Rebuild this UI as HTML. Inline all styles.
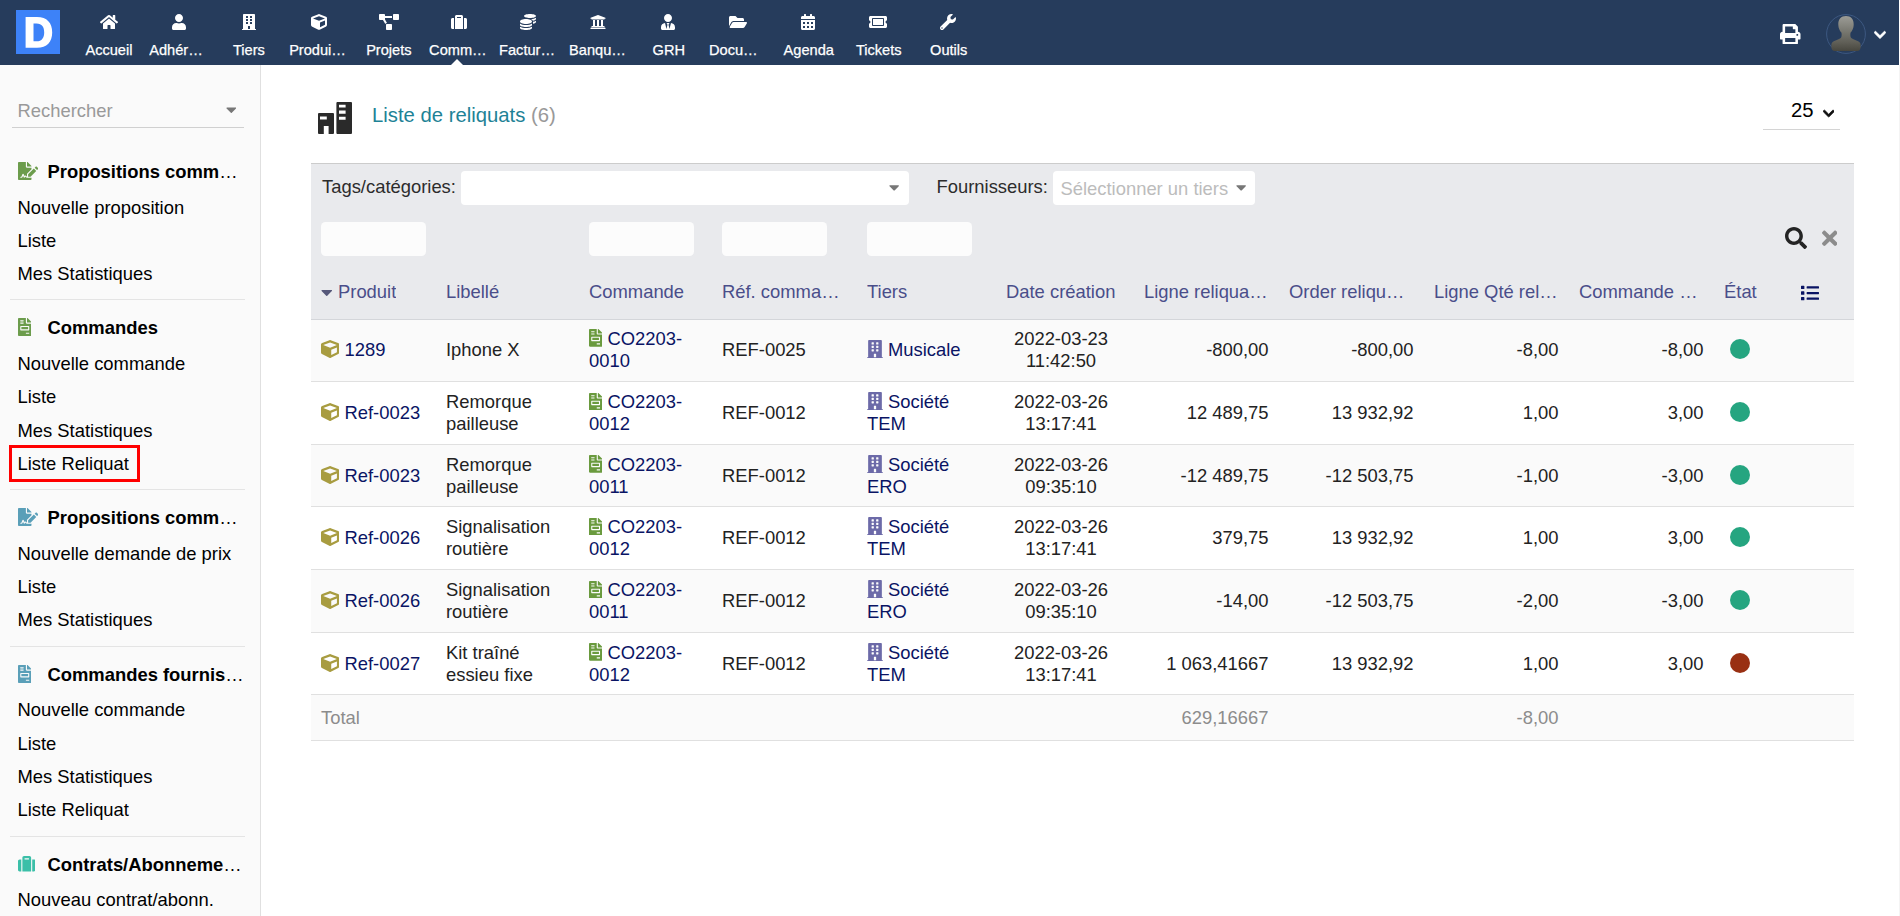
<!DOCTYPE html>
<html><head><meta charset="utf-8"><title>Liste de reliquats</title>
<style>
html,body{margin:0;padding:0;}
body{width:1900px;height:916px;overflow:hidden;background:#fff;position:relative;font-family:"Liberation Sans",sans-serif;font-size:18.4px;color:#000;line-height:22px;}
div,span,a{box-sizing:border-box;}
.abs{position:absolute;white-space:nowrap;}
#top{position:absolute;left:0;top:0;width:1899px;height:65px;background:#263c5c;}
#logo{position:absolute;left:16px;top:10px;width:44px;height:44px;background:#3d82f8;}
.tm{position:absolute;top:39.700px;width:59.500px;height:20px;line-height:20px;font-size:14.600px;color:#fff;-webkit-text-stroke:0.250px #fff;text-align:center;white-space:nowrap;overflow:hidden;text-overflow:ellipsis;}
.tml{text-align:left;}
#side{position:absolute;left:0;top:65px;width:260px;height:851px;background:#fafafa;border-right:1px solid #e0e0e0;box-sizing:content-box;}
.mt b{font-weight:bold;}
.mt{position:absolute;left:47.5px;font-weight:normal;font-size:18.4px;line-height:22px;white-space:nowrap;width:197px;overflow:hidden;text-overflow:ellipsis;color:#000;}
.mi{position:absolute;left:17.5px;line-height:22px;white-space:nowrap;color:#000;}
.sep{position:absolute;left:9.500px;width:235.500px;height:1px;background:#e4e4e4;}
.hd{position:absolute;color:#4a4e8a;white-space:nowrap;line-height:22px;overflow:hidden;text-overflow:ellipsis;}
.row{position:absolute;left:311px;width:1543px;border-bottom:1px solid #e0e0e0;}
.c{position:absolute;white-space:nowrap;line-height:22px;}
.lk{color:#0a1464;}
.r{text-align:right;}
.inp{position:absolute;top:222px;width:105px;height:34px;background:#fcfcfc;border-radius:4.500px;}
.dot{position:absolute;width:20px;height:20px;border-radius:50%;}
</style></head><body>

<div id="top">
<div id="logo"><svg viewBox="0 0 44 44" width="44" height="44" style="position:absolute;left:0;top:0"><path fill="#fff" fill-rule="evenodd" d="M9.600 7.100 H21 C31 7.100 36.200 13 36.200 22.400 C36.200 31.800 31 37.700 21 37.700 H9.600 Z M17.500 13.600 V31.300 H20.500 C26 31.300 28.200 27.500 28.200 22.400 C28.200 17.300 26 13.600 20.500 13.600 Z"/></svg></div>
<svg viewBox="0 0 576 512" width="18.00" height="16.00" style="position:absolute;left:99.60px;top:14.00px;" fill="#fff"><path d="M280.37 148.26L96 300.11V464a16 16 0 0 0 16 16l112.060-.29a16 16 0 0 0 15.920-16V368a16 16 0 0 1 16-16h64a16 16 0 0 1 16 16v95.640a16 16 0 0 0 16 16.050L464 480a16 16 0 0 0 16-16V300L295.670 148.260a12.190 12.190 0 0 0-15.300 0zM571.600 251.470L488 182.560V44.050a12 12 0 0 0-12-12h-56a12 12 0 0 0-12 12v72.610L318.470 43a48 48 0 0 0-61 0L4.340 251.470a12 12 0 0 0-1.600 16.900l25.500 31A12 12 0 0 0 45.150 301l235.220-193.740a12.190 12.190 0 0 1 15.300 0L530.900 301a12 12 0 0 0 16.900-1.600l25.500-31a12 12 0 0 0-1.700-16.930z"/></svg>
<div class="tm" style="left:79.20px">Accueil</div>
<svg viewBox="0 0 448 512" width="14.00" height="16.00" style="position:absolute;left:171.58px;top:14.00px;" fill="#fff"><path d="M224 256c70.700 0 128-57.300 128-128S294.700 0 224 0 96 57.300 96 128s57.300 128 128 128zm89.600 32h-16.700c-22.200 10.200-46.900 16-72.900 16s-50.600-5.800-72.900-16h-16.700C60.200 288 0 348.200 0 422.400V464c0 26.500 21.500 48 48 48h352c26.500 0 48-21.500 48-48v-41.600c0-74.200-60.200-134.400-134.400-134.400z"/></svg>
<div class="tm tml" style="left:149.18px">Adhérents</div>
<svg viewBox="0 0 448 512" width="14.00" height="16.00" style="position:absolute;left:241.56px;top:14.00px;" fill="#fff"><path d="M436 480h-20V24c0-13.255-10.745-24-24-24H56C42.745 0 32 10.745 32 24v456H12c-6.627 0-12 5.373-12 12v20h448v-20c0-6.627-5.373-12-12-12zM128 76c0-6.627 5.373-12 12-12h40c6.627 0 12 5.373 12 12v40c0 6.627-5.373 12-12 12h-40c-6.627 0-12-5.373-12-12V76zm0 96c0-6.627 5.373-12 12-12h40c6.627 0 12 5.373 12 12v40c0 6.627-5.373 12-12 12h-40c-6.627 0-12-5.373-12-12v-40zm52 148h-40c-6.627 0-12-5.373-12-12v-40c0-6.627 5.373-12 12-12h40c6.627 0 12 5.373 12 12v40c0 6.627-5.373 12-12 12zm76 160h-64v-84c0-6.627 5.373-12 12-12h40c6.627 0 12 5.373 12 12v84zm64-172c0 6.627-5.373 12-12 12h-40c-6.627 0-12-5.373-12-12v-40c0-6.627 5.373-12 12-12h40c6.627 0 12 5.373 12 12v40zm0-96c0 6.627-5.373 12-12 12h-40c-6.627 0-12-5.373-12-12v-40c0-6.627 5.373-12 12-12h40c6.627 0 12 5.373 12 12v40zm0-96c0 6.627-5.373 12-12 12h-40c-6.627 0-12-5.373-12-12V76c0-6.627 5.373-12 12-12h40c6.627 0 12 5.373 12 12v40z"/></svg>
<div class="tm" style="left:219.16px">Tiers</div>
<svg viewBox="0 0 512 512" width="16.00" height="16.00" style="position:absolute;left:310.54px;top:14.00px;" fill="#fff"><path d="M239.100 6.300l-208 78c-18.700 7-31.100 25-31.100 45v225.100c0 18.200 10.300 34.800 26.500 42.900l208 104c13.500 6.800 29.400 6.800 42.900 0l208-104c16.300-8.100 26.500-24.800 26.500-42.900V129.300c0-20-12.400-37.900-31.100-44.900l-208-78C262 2.200 250 2.200 239.100 6.300zM256 68.400l192 72v1.100l-192 78-192-78v-1.100l192-72zm32 356V275.500l160-65v133.900l-160 80z"/></svg>
<div class="tm tml" style="left:289.14px">Produits | Services</div>
<svg viewBox="0 0 640 512" width="20.00" height="16.00" style="position:absolute;left:378.52px;top:14.00px;" fill="#fff"><path d="M384 320H256c-17.670 0-32 14.330-32 32v128c0 17.670 14.330 32 32 32h128c17.670 0 32-14.330 32-32V352c0-17.670-14.330-32-32-32zM192 32c0-17.670-14.330-32-32-32H32C14.330 0 0 14.330 0 32v128c0 17.670 14.330 32 32 32h95.720l73.160 128.040C211.980 300.980 232.400 288 256 288h.28L192 175.510V128h224V64H192V32zM608 0H480c-17.670 0-32 14.330-32 32v128c0 17.670 14.330 32 32 32h128c17.670 0 32-14.330 32-32V32c0-17.670-14.330-32-32-32z"/></svg>
<div class="tm" style="left:359.12px">Projets</div>
<svg viewBox="0 0 512 512" width="16.00" height="16.00" style="position:absolute;left:450.50px;top:14.00px;" fill="#fff"><path d="M128 480h256V80c0-26.500-21.500-48-48-48H176c-26.500 0-48 21.500-48 48v400zm64-384h128v32H192V96zm320 80v256c0 26.500-21.500 48-48 48h-48V128h48c26.500 0 48 21.500 48 48zM96 480H48c-26.500 0-48-21.500-48-48V176c0-26.500 21.500-48 48-48h48v352z"/></svg>
<div class="tm tml" style="left:429.10px">Commerce</div>
<svg viewBox="0 0 512 512" width="16.00" height="16.00" style="position:absolute;left:520.48px;top:14.00px;" fill="#fff"><path d="M0 405.300V448c0 35.300 86 64 192 64s192-28.700 192-64v-42.700C342.700 434.400 267.200 448 192 448S41.300 434.400 0 405.300zM320 128c106 0 192-28.700 192-64S426 0 320 0 128 28.700 128 64s86 64 192 64zM0 300.400V352c0 35.300 86 64 192 64s192-28.700 192-64v-51.600c-41.300 34-116.900 51.600-192 51.600S41.300 334.400 0 300.400zm416 11c57.300-11.100 96-31.700 96-55.400v-42.700c-23.200 16.400-57.300 27.600-96 34.500v63.600zM192 160C86 160 0 195.800 0 240s86 80 192 80 192-35.800 192-80-86-80-192-80zm219.300 56.300c60-10.800 100.700-32 100.700-56.300v-42.700c-35.500 25.100-96.500 38.600-160.700 41.800 29.500 14.300 51.200 33.500 60 57.200z"/></svg>
<div class="tm tml" style="left:499.08px">Facturation | Paiement</div>
<svg viewBox="0 0 512 512" width="16.00" height="16.00" style="position:absolute;left:590.46px;top:14.00px;" fill="#fff"><path d="M496 128v16a8 8 0 0 1-8 8h-24v12c0 6.627-5.373 12-12 12H60c-6.627 0-12-5.373-12-12v-12H24a8 8 0 0 1-8-8v-16a8 8 0 0 1 4.941-7.392l232-88a7.996 7.996 0 0 1 6.118 0l232 88A8 8 0 0 1 496 128zm-24 304H40c-13.255 0-24 10.745-24 24v16a8 8 0 0 0 8 8h464a8 8 0 0 0 8-8v-16c0-13.255-10.745-24-24-24zM96 192v192H60c-6.627 0-12 5.373-12 12v20h416v-20c0-6.627-5.373-12-12-12h-36V192h-64v192h-64V192h-64v192h-64V192H96z"/></svg>
<div class="tm tml" style="left:569.06px">Banques | Caisses</div>
<svg viewBox="0 0 448 512" width="14.00" height="16.00" style="position:absolute;left:661.44px;top:14.00px;" fill="#fff"><path d="M224 256c70.700 0 128-57.300 128-128S294.700 0 224 0 96 57.300 96 128s57.300 128 128 128zm95.800 32.600L272 480l-32-136 32-56h-96l32 56-32 136-47.800-191.400C56.900 292 0 350.300 0 422.400V464c0 26.500 21.500 48 48 48h352c26.500 0 48-21.500 48-48v-41.600c0-72.100-56.900-130.400-128.200-133.800z"/></svg>
<div class="tm" style="left:639.04px">GRH</div>
<svg viewBox="0 0 576 512" width="18.00" height="16.00" style="position:absolute;left:729.42px;top:14.00px;" fill="#fff"><path d="M572.694 292.093L500.270 416.248A63.997 63.997 0 0 1 444.989 448H45.025c-18.523 0-30.064-20.093-20.731-36.093l72.424-124.155A64 64 0 0 1 152 256h399.964c18.523 0 30.064 20.093 20.730 36.093zM152 224h328v-48c0-26.510-21.490-48-48-48H272l-64-64H48C21.490 64 0 85.490 0 112v278.046l69.077-118.418C86.214 242.250 117.989 224 152 224z"/></svg>
<div class="tm tml" style="left:709.02px">Documents</div>
<svg viewBox="0 0 448 512" width="14.00" height="16.00" style="position:absolute;left:801.40px;top:14.00px;" fill="#fff"><path d="M0 464c0 26.500 21.500 48 48 48h352c26.500 0 48-21.500 48-48V192H0v272zm320-196c0-6.600 5.400-12 12-12h40c6.600 0 12 5.400 12 12v40c0 6.600-5.400 12-12 12h-40c-6.600 0-12-5.400-12-12v-40zm0 128c0-6.600 5.400-12 12-12h40c6.600 0 12 5.400 12 12v40c0 6.600-5.400 12-12 12h-40c-6.600 0-12-5.400-12-12v-40zM192 268c0-6.600 5.400-12 12-12h40c6.600 0 12 5.400 12 12v40c0 6.600-5.400 12-12 12h-40c-6.600 0-12-5.400-12-12v-40zm0 128c0-6.600 5.400-12 12-12h40c6.600 0 12 5.400 12 12v40c0 6.600-5.400 12-12 12h-40c-6.600 0-12-5.400-12-12v-40zM64 268c0-6.600 5.400-12 12-12h40c6.600 0 12 5.400 12 12v40c0 6.600-5.400 12-12 12H76c-6.600 0-12-5.400-12-12v-40zm0 128c0-6.600 5.400-12 12-12h40c6.600 0 12 5.400 12 12v40c0 6.600-5.400 12-12 12H76c-6.600 0-12-5.400-12-12v-40zM400 64h-48V16c0-8.800-7.200-16-16-16h-32c-8.800 0-16 7.200-16 16v48H160V16c0-8.800-7.200-16-16-16h-32c-8.800 0-16 7.200-16 16v48H48C21.500 64 0 85.500 0 112v48h448v-48c0-26.500-21.500-48-48-48z"/></svg>
<div class="tm" style="left:779.00px">Agenda</div>
<svg viewBox="0 0 576 512" width="18.00" height="16.00" style="position:absolute;left:869.38px;top:14.00px;" fill="#fff"><path d="M128 160h320v192H128V160zm400 96c0 26.510 21.490 48 48 48v96c0 26.510-21.490 48-48 48H48c-26.510 0-48-21.490-48-48v-96c26.510 0 48-21.490 48-48s-21.490-48-48-48v-96c0-26.510 21.490-48 48-48h480c26.510 0 48 21.490 48 48v96c-26.510 0-48 21.490-48 48zm-48-104c0-13.255-10.745-24-24-24H120c-13.255 0-24 10.745-24 24v208c0 13.255 10.745 24 24 24h336c13.255 0 24-10.745 24-24V152z"/></svg>
<div class="tm" style="left:848.98px">Tickets</div>
<svg viewBox="0 0 512 512" width="16.00" height="16.00" style="position:absolute;left:940.36px;top:14.00px;" fill="#fff"><path d="M507.730 109.100c-2.240-9.030-13.540-12.090-20.120-5.510l-74.360 74.360-67.880-11.310-11.310-67.880 74.360-74.360c6.620-6.620 3.430-17.900-5.660-20.160-47.380-11.740-99.550.91-136.580 37.930-39.640 39.640-50.550 97.100-34.050 147.200L18.740 402.760c-24.990 24.990-24.990 65.510 0 90.500 24.990 24.990 65.510 24.990 90.500 0l213.210-213.210c50.120 16.710 107.470 5.680 147.370-34.220 37.070-37.070 49.700-89.320 37.910-136.730zM64 472c-13.250 0-24-10.750-24-24 0-13.260 10.750-24 24-24s24 10.740 24 24c0 13.250-10.750 24-24 24z"/></svg>
<div class="tm" style="left:918.96px">Outils</div>
<div style="position:absolute;left:451px;top:59px;width:0;height:0;border-left:6px solid transparent;border-right:6px solid transparent;border-bottom:6px solid #fff"></div>
<svg viewBox="0 0 512 512" width="20.50" height="20.50" style="position:absolute;left:1780.30px;top:23.60px;" fill="#fff"><path d="M448 192V77.250c0-8.490-3.370-16.620-9.370-22.630L393.370 9.370c-6-6-14.140-9.370-22.630-9.370H96C78.330 0 64 14.330 64 32v160c-35.350 0-64 28.650-64 64v112c0 8.840 7.160 16 16 16h48v96c0 17.670 14.330 32 32 32h320c17.670 0 32-14.330 32-32v-96h48c8.840 0 16-7.160 16-16V256c0-35.350-28.650-64-64-64zm-64 256H128v-96h256v96zm0-224H128V64h192v48c0 8.840 7.160 16 16 16h48v96zm48 72c-13.250 0-24-10.750-24-24 0-13.260 10.750-24 24-24s24 10.740 24 24c0 13.250-10.750 24-24 24z"/></svg>
<svg width="40" height="40" viewBox="0 0 40 40" style="position:absolute;left:1825.500px;top:13.800px"><defs><linearGradient id="ag" x1="0" y1="0" x2="0" y2="1"><stop offset="0" stop-color="#9c9c96"/><stop offset="0.450" stop-color="#77776f"/><stop offset="0.750" stop-color="#605f57"/><stop offset="1" stop-color="#48473f"/></linearGradient></defs><circle cx="20" cy="20" r="19.400" fill="none" stroke="#3f5b86" stroke-width="0.900"/><path fill="url(#ag)" d="M20 2.100c-4.900 0-7.900 3.400-7.700 8.600 .1 3.300 1.400 6.300 3.200 8.100 .3 2 .2 3.900-.5 4.900-1.400 1.700-5.500 2.300-8.300 4.300-1.500 1.100-1.400 3.200-1.300 5.200 .1 2.400 1.200 3.800 3.600 3.800h22c2.400 0 3.500-1.400 3.600-3.800 .1-2 .2-4.100-1.300-5.200-2.800-2-6.900-2.600-8.300-4.300-.7-1-.8-2.900-.5-4.900 1.800-1.800 3.100-4.800 3.200-8.100 .2-5.200-2.800-8.600-7.700-8.600z"/></svg>
<svg viewBox="0 0 448 512" width="11.99" height="13.70" style="position:absolute;left:1873.80px;top:27.90px;stroke:#fff;stroke-width:24;" fill="#fff"><path d="M207.029 381.476L12.686 187.132c-9.373-9.373-9.373-24.569 0-33.941l22.667-22.667c9.357-9.357 24.522-9.375 33.901-.04L224 284.505l154.745-154.021c9.379-9.335 24.544-9.317 33.901.04l22.667 22.667c9.373 9.373 9.373 24.569 0 33.941L240.971 381.476c-9.373 9.372-24.569 9.372-33.942 0z"/></svg>
</div>
<div id="side">
<div class="abs" style="left:17.5px;top:35px;color:#999;">Rechercher</div>
<svg viewBox="0 0 320 512" width="10.62" height="17.00" style="position:absolute;left:225.50px;top:36.40px;" fill="#777"><path d="M31.300 192h257.300c17.800 0 26.700 21.500 14.100 34.100L174.100 354.800c-7.800 7.800-20.500 7.800-28.300 0L17.200 226.100C4.600 213.500 13.500 192 31.300 192z"/></svg>
<div style="position:absolute;left:11.500px;top:62px;width:232px;height:1px;background:#d0d0d0"></div>
<svg viewBox="0 0 576 512" width="20.25" height="18.00" style="position:absolute;left:17.70px;top:97.00px;" fill="#6c9c4c"><path d="M218.170 424.140c-2.950-5.920-8.090-6.520-10.170-6.520s-7.220.59-10.020 6.190l-7.670 15.340c-6.370 12.780-25.030 11.370-29.480-2.090L144 386.590l-10.610 31.880c-5.890 17.660-22.380 29.530-41 29.530H80c-8.840 0-16-7.160-16-16s7.160-16 16-16h12.390c4.830 0 9.110-3.080 10.640-7.660l18.190-54.640c3.300-9.810 12.440-16.410 22.780-16.410s19.480 6.590 22.770 16.410l13.880 41.640c19.750-16.190 54.060-9.700 66 14.160 1.890 3.780 5.490 5.950 9.360 6.260v-82.120l128-127.090V160H248c-13.200 0-24-10.800-24-24V0H24C10.700 0 0 10.700 0 24v464c0 13.300 10.700 24 24 24h336c13.300 0 24-10.700 24-24v-40l-128-.11c-16.120-.31-30.580-9.280-37.830-23.750zM384 121.900c0-6.300-2.500-12.400-7-16.900L279.100 7c-4.500-4.500-10.600-7-17-7H256v128h128v-6.100zm-96 225.060V416h68.990l161.680-162.780-67.880-67.880L288 346.960zm280.540-179.630l-31.870-31.870c-9.940-9.940-26.070-9.940-36.010 0l-27.250 27.250 67.880 67.880 27.250-27.250c9.950-9.940 9.950-26.070 0-36.010z"/></svg>
<div class="mt" style="top:96.2px"><b>Propositions commerciales</b></div>
<div class="mi" style="top:132.2px">Nouvelle proposition</div>
<div class="mi" style="top:165.2px">Liste</div>
<div class="mi" style="top:198.2px">Mes Statistiques</div>
<div class="sep" style="top:234px"></div>
<svg viewBox="0 0 384 512" width="13.50" height="18.00" style="position:absolute;left:17.70px;top:253.00px;" fill="#6c9c4c"><path d="M288 256H96v64h192v-64zm89-151L279.100 7c-4.500-4.500-10.600-7-17-7H256v128h128v-6.100c0-6.300-2.500-12.400-7-16.900zm-153 31V0H24C10.700 0 0 10.700 0 24v464c0 13.300 10.700 24 24 24h336c13.300 0 24-10.700 24-24V160H248c-13.200 0-24-10.800-24-24zM64 72c0-4.420 3.580-8 8-8h80c4.420 0 8 3.580 8 8v16c0 4.420-3.580 8-8 8H72c-4.420 0-8-3.580-8-8V72zm0 64c0-4.420 3.580-8 8-8h80c4.420 0 8 3.580 8 8v16c0 4.420-3.580 8-8 8H72c-4.420 0-8-3.580-8-8v-16zm256 304c0 4.420-3.580 8-8 8h-80c-4.420 0-8-3.580-8-8v-16c0-4.420 3.580-8 8-8h80c4.420 0 8 3.580 8 8v16zm0-200v96c0 8.840-7.160 16-16 16H80c-8.840 0-16-7.160-16-16v-96c0-8.840 7.160-16 16-16h224c8.840 0 16 7.160 16 16z"/></svg>
<div class="mt" style="top:252.2px"><b>Commandes</b></div>
<div class="mi" style="top:288.2px">Nouvelle commande</div>
<div class="mi" style="top:321.2px">Liste</div>
<div class="mi" style="top:355.2px">Mes Statistiques</div>
<div class="mi" style="top:388.2px">Liste Reliquat</div>
<div class="sep" style="top:424px"></div>
<div style="position:absolute;left:9px;top:380px;width:131px;height:37px;border:3px solid #ff0000;"></div>
<svg viewBox="0 0 576 512" width="20.25" height="18.00" style="position:absolute;left:17.70px;top:443.00px;" fill="#5a9fb8"><path d="M218.170 424.140c-2.950-5.920-8.090-6.520-10.170-6.520s-7.220.59-10.020 6.190l-7.670 15.340c-6.370 12.780-25.030 11.370-29.480-2.090L144 386.590l-10.610 31.880c-5.890 17.660-22.380 29.530-41 29.530H80c-8.840 0-16-7.160-16-16s7.160-16 16-16h12.390c4.830 0 9.110-3.080 10.640-7.660l18.190-54.640c3.300-9.810 12.440-16.410 22.780-16.410s19.480 6.590 22.770 16.410l13.880 41.640c19.750-16.190 54.060-9.700 66 14.160 1.890 3.780 5.490 5.950 9.360 6.260v-82.120l128-127.090V160H248c-13.200 0-24-10.800-24-24V0H24C10.700 0 0 10.700 0 24v464c0 13.300 10.700 24 24 24h336c13.300 0 24-10.700 24-24v-40l-128-.11c-16.120-.31-30.580-9.280-37.830-23.750zM384 121.900c0-6.300-2.500-12.400-7-16.900L279.100 7c-4.500-4.500-10.600-7-17-7H256v128h128v-6.100zm-96 225.060V416h68.990l161.680-162.780-67.880-67.880L288 346.960zm280.540-179.630l-31.870-31.870c-9.940-9.940-26.070-9.940-36.010 0l-27.250 27.250 67.880 67.880 27.250-27.250c9.950-9.940 9.950-26.070 0-36.010z"/></svg>
<div class="mt" style="top:442.2px"><b>Propositions commerciales fournisseurs</b></div>
<div class="mi" style="top:478.2px">Nouvelle demande de prix</div>
<div class="mi" style="top:511.2px">Liste</div>
<div class="mi" style="top:544.2px">Mes Statistiques</div>
<div class="sep" style="top:581px"></div>
<svg viewBox="0 0 384 512" width="13.50" height="18.00" style="position:absolute;left:17.70px;top:600.00px;" fill="#5a9fb8"><path d="M288 256H96v64h192v-64zm89-151L279.100 7c-4.500-4.500-10.600-7-17-7H256v128h128v-6.100c0-6.300-2.500-12.400-7-16.900zm-153 31V0H24C10.700 0 0 10.700 0 24v464c0 13.300 10.700 24 24 24h336c13.300 0 24-10.700 24-24V160H248c-13.200 0-24-10.800-24-24zM64 72c0-4.420 3.580-8 8-8h80c4.420 0 8 3.580 8 8v16c0 4.420-3.580 8-8 8H72c-4.420 0-8-3.580-8-8V72zm0 64c0-4.420 3.580-8 8-8h80c4.420 0 8 3.580 8 8v16c0 4.420-3.580 8-8 8H72c-4.420 0-8-3.580-8-8v-16zm256 304c0 4.420-3.580 8-8 8h-80c-4.420 0-8-3.580-8-8v-16c0-4.420 3.580-8 8-8h80c4.420 0 8 3.580 8 8v16zm0-200v96c0 8.840-7.160 16-16 16H80c-8.840 0-16-7.160-16-16v-96c0-8.840 7.160-16 16-16h224c8.840 0 16 7.160 16 16z"/></svg>
<div class="mt" style="top:599.2px"><b>Commandes fournisseurs</b></div>
<div class="mi" style="top:634.2px">Nouvelle commande</div>
<div class="mi" style="top:668.2px">Liste</div>
<div class="mi" style="top:701.2px">Mes Statistiques</div>
<div class="mi" style="top:734.2px">Liste Reliquat</div>
<div class="sep" style="top:771px"></div>
<svg viewBox="0 0 512 512" width="17.50" height="17.50" style="position:absolute;left:17.70px;top:790.25px;" fill="#3bbfa8"><path d="M128 480h256V80c0-26.500-21.500-48-48-48H176c-26.500 0-48 21.500-48 48v400zm64-384h128v32H192V96zm320 80v256c0 26.500-21.500 48-48 48h-48V128h48c26.500 0 48 21.500 48 48zM96 480H48c-26.500 0-48-21.500-48-48V176c0-26.500 21.500-48 48-48h48v352z"/></svg>
<div class="mt" style="top:789.2px"><b>Contrats/Abonnements</b></div>
<div class="mi" style="top:824.2px">Nouveau contrat/abonn.</div>
</div>
<div style="position:absolute;left:1899px;top:65px;width:1px;height:851px;background:#f4f4f4"></div>
<svg width="34" height="32" viewBox="0 0 34 32" style="position:absolute;left:318.200px;top:101.800px"><path fill="#2a2a2a" fill-rule="evenodd" d="M1 11h14a1 1 0 0 1 1 1v19a1 1 0 0 1-1 1h-4.400v-8h-4.800v8h-4.800a1 1 0 0 1-1-1v-19a1 1 0 0 1 1-1zM2 14.400h6.800v3.200h-6.800zM19.400 0h13.600a1 1 0 0 1 1 1v30a1 1 0 0 1-1 1h-13.600a1 1 0 0 1-1-1v-30a1 1 0 0 1 1-1zM21 2.700h6.600v2.700h-6.600zM21 8.500h6.600v3.200h-6.600zM21 14.800h6.600v2.900h-6.600z"/></svg>
<div class="abs" style="left:372px;top:103px;font-size:20.3px;line-height:24px;color:#1e8296;">Liste de reliquats <span style="color:#999">(6)</span></div>
<div class="abs" style="left:1790.900px;top:97.800px;font-size:20.300px;line-height:24px;color:#000;">25</div>
<svg viewBox="0 0 448 512" width="11.38" height="13.00" style="position:absolute;left:1823.10px;top:107.20px;stroke:#111;stroke-width:30;" fill="#111"><path d="M207.029 381.476L12.686 187.132c-9.373-9.373-9.373-24.569 0-33.941l22.667-22.667c9.357-9.357 24.522-9.375 33.901-.04L224 284.505l154.745-154.021c9.379-9.335 24.544-9.317 33.901.04l22.667 22.667c9.373 9.373 9.373 24.569 0 33.941L240.971 381.476c-9.373 9.372-24.569 9.372-33.942 0z"/></svg>
<div style="position:absolute;left:1763px;top:129px;width:77px;height:1px;background:#d4d4d4"></div>
<div style="position:absolute;left:311px;top:163px;width:1543px;height:157px;background:#e9eaed;border-top:1px solid #ccc;border-bottom:1px solid #d4d6da;"></div>
<div class="abs" style="left:322px;top:176px;color:#2c2c2c;">Tags/catégories:</div>
<div style="position:absolute;left:461px;top:171.300px;width:448px;height:34px;background:#fff;border-radius:4px;"></div>
<svg viewBox="0 0 320 512" width="10.31" height="16.50" style="position:absolute;left:889.30px;top:179.00px;" fill="#777"><path d="M31.300 192h257.300c17.800 0 26.700 21.500 14.100 34.100L174.100 354.800c-7.800 7.800-20.500 7.800-28.300 0L17.200 226.100C4.600 213.500 13.500 192 31.300 192z"/></svg>
<div class="abs" style="left:936.5px;top:176px;color:#2c2c2c;">Fournisseurs:</div>
<div style="position:absolute;left:1053px;top:171.300px;width:202px;height:34px;background:#fff;border-radius:4px;"></div>
<div class="abs" style="left:1060.5px;top:177.5px;color:#bcbcbc;">Sélectionner un tiers</div>
<svg viewBox="0 0 320 512" width="10.31" height="16.50" style="position:absolute;left:1236.30px;top:179.00px;" fill="#777"><path d="M31.300 192h257.300c17.800 0 26.700 21.500 14.100 34.100L174.100 354.800c-7.800 7.800-20.500 7.800-28.300 0L17.200 226.100C4.600 213.500 13.500 192 31.300 192z"/></svg>
<div class="inp" style="left:321px"></div>
<div class="inp" style="left:589px"></div>
<div class="inp" style="left:722px"></div>
<div class="inp" style="left:867px"></div>
<svg viewBox="0 0 512 512" width="22.00" height="22.00" style="position:absolute;left:1785.00px;top:227.40px;" fill="#242424"><path d="M505 442.700L405.300 343c-4.500-4.500-10.600-7-17-7H372c27.600-35.300 44-79.700 44-128C416 93.100 322.900 0 208 0S0 93.100 0 208s93.100 208 208 208c48.300 0 92.700-16.400 128-44v16.300c0 6.400 2.500 12.500 7 17l99.700 99.700c9.400 9.400 24.600 9.400 33.900 0l28.300-28.300c9.400-9.400 9.400-24.600.1-34zM208 336c-70.700 0-128-57.200-128-128 0-70.700 57.200-128 128-128 70.700 0 128 57.200 128 128 0 70.700-57.200 128-128 128z"/></svg>
<svg viewBox="0 0 352 512" width="15.47" height="22.50" style="position:absolute;left:1821.80px;top:226.80px;" fill="#8c8c8c"><path d="M242.720 256l100.070-100.070c12.280-12.280 12.280-32.190 0-44.480l-22.240-22.240c-12.280-12.280-32.190-12.280-44.480 0L176 189.280 75.930 89.210c-12.280-12.280-32.190-12.280-44.480 0L9.210 111.450c-12.280 12.280-12.280 32.190 0 44.480L109.280 256 9.210 356.070c-12.280 12.280-12.280 32.190 0 44.480l22.240 22.240c12.280 12.280 32.200 12.280 44.480 0L176 322.720l100.070 100.070c12.280 12.280 32.200 12.280 44.480 0l22.240-22.240c12.280-12.280 12.280-32.190 0-44.480L242.720 256z"/></svg>
<svg viewBox="0 0 320 512" width="11.50" height="18.40" style="position:absolute;left:320.90px;top:282.60px;" fill="#56587a"><path d="M31.300 192h257.300c17.800 0 26.700 21.500 14.100 34.100L174.100 354.800c-7.800 7.800-20.500 7.800-28.300 0L17.200 226.100C4.600 213.500 13.500 192 31.300 192z"/></svg>
<div class="hd" style="left:338px;top:281px;">Produit</div>
<div class="hd" style="left:446px;top:281px;">Libellé</div>
<div class="hd" style="left:589px;top:281px;">Commande</div>
<div class="hd" style="left:722px;top:281px;width:124.5px;">Réf. commande client</div>
<div class="hd" style="left:867px;top:281px;">Tiers</div>
<div class="hd" style="left:1006px;top:281px;">Date création</div>
<div class="hd" style="left:1144px;top:281px;width:124.5px;">Ligne reliquat HT</div>
<div class="hd" style="left:1289px;top:281px;width:124.5px;">Order reliquat HT</div>
<div class="hd" style="left:1434px;top:281px;width:124.5px;">Ligne Qté reliquat</div>
<div class="hd" style="left:1579px;top:281px;width:124.5px;">Commande Qté reliquat</div>
<div class="hd" style="left:1724px;top:281px;">État</div>
<svg viewBox="0 0 512 512" width="18.00" height="18.00" style="position:absolute;left:1801.00px;top:284.00px;" fill="#0a1464"><path d="M80 368H16a16 16 0 0 0-16 16v64a16 16 0 0 0 16 16h64a16 16 0 0 0 16-16v-64a16 16 0 0 0-16-16zm0-320H16A16 16 0 0 0 0 64v64a16 16 0 0 0 16 16h64a16 16 0 0 0 16-16V64a16 16 0 0 0-16-16zm0 160H16a16 16 0 0 0-16 16v64a16 16 0 0 0 16 16h64a16 16 0 0 0 16-16v-64a16 16 0 0 0-16-16zm416 176H176a16 16 0 0 0-16 16v32a16 16 0 0 0 16 16h320a16 16 0 0 0 16-16v-32a16 16 0 0 0-16-16zm0-320H176a16 16 0 0 0-16 16v32a16 16 0 0 0 16 16h320a16 16 0 0 0 16-16V80a16 16 0 0 0-16-16zm0 160H176a16 16 0 0 0-16 16v32a16 16 0 0 0 16 16h320a16 16 0 0 0 16-16v-32a16 16 0 0 0-16-16z"/></svg>
<div class="row" style="top:320px;height:62px;background:#fafafa;">
<svg viewBox="0 0 512 512" width="18.20" height="18.20" style="position:absolute;left:9.70px;top:19.50px;" fill="#a89c40"><path d="M239.100 6.300l-208 78c-18.700 7-31.100 25-31.100 45v225.100c0 18.200 10.300 34.800 26.500 42.900l208 104c13.500 6.800 29.400 6.800 42.900 0l208-104c16.300-8.100 26.500-24.800 26.500-42.900V129.300c0-20-12.400-37.900-31.100-44.900l-208-78C262 2.200 250 2.200 239.100 6.300zM256 68.400l192 72v1.100l-192 78-192-78v-1.100l192-72zm32 356V275.500l160-65v133.900l-160 80z"/></svg>
<div class="c lk" style="left:33.5px;top:18.5px">1289</div>
<div class="c" style="left:135px;top:18.5px;color:#222">Iphone X</div>
<svg viewBox="0 0 384 512" width="13.27" height="17.70" style="position:absolute;left:278.00px;top:9.20px;" fill="#6a9a3e"><path d="M288 256H96v64h192v-64zm89-151L279.100 7c-4.500-4.500-10.600-7-17-7H256v128h128v-6.100c0-6.300-2.500-12.400-7-16.900zm-153 31V0H24C10.700 0 0 10.700 0 24v464c0 13.300 10.700 24 24 24h336c13.300 0 24-10.700 24-24V160H248c-13.200 0-24-10.800-24-24zM64 72c0-4.420 3.580-8 8-8h80c4.420 0 8 3.580 8 8v16c0 4.420-3.580 8-8 8H72c-4.420 0-8-3.580-8-8V72zm0 64c0-4.420 3.580-8 8-8h80c4.420 0 8 3.580 8 8v16c0 4.420-3.580 8-8 8H72c-4.420 0-8-3.580-8-8v-16zm256 304c0 4.420-3.580 8-8 8h-80c-4.420 0-8-3.580-8-8v-16c0-4.420 3.580-8 8-8h80c4.420 0 8 3.580 8 8v16zm0-200v96c0 8.840-7.160 16-16 16H80c-8.840 0-16-7.160-16-16v-96c0-8.840 7.160-16 16-16h224c8.840 0 16 7.160 16 16z"/></svg>
<div class="c lk" style="left:296.5px;top:7.5px">CO2203-</div><div class="c lk" style="left:278px;top:29.5px">0010</div>
<div class="c" style="left:411px;top:18.5px;color:#222">REF-0025</div>
<svg viewBox="0 0 448 512" width="16.01" height="18.30" style="position:absolute;left:555.60px;top:19.50px;" fill="#6c6aa8"><path d="M436 480h-20V24c0-13.255-10.745-24-24-24H56C42.745 0 32 10.745 32 24v456H12c-6.627 0-12 5.373-12 12v20h448v-20c0-6.627-5.373-12-12-12zM128 76c0-6.627 5.373-12 12-12h40c6.627 0 12 5.373 12 12v40c0 6.627-5.373 12-12 12h-40c-6.627 0-12-5.373-12-12V76zm0 96c0-6.627 5.373-12 12-12h40c6.627 0 12 5.373 12 12v40c0 6.627-5.373 12-12 12h-40c-6.627 0-12-5.373-12-12v-40zm52 148h-40c-6.627 0-12-5.373-12-12v-40c0-6.627 5.373-12 12-12h40c6.627 0 12 5.373 12 12v40c0 6.627-5.373 12-12 12zm76 160h-64v-84c0-6.627 5.373-12 12-12h40c6.627 0 12 5.373 12 12v84zm64-172c0 6.627-5.373 12-12 12h-40c-6.627 0-12-5.373-12-12v-40c0-6.627 5.373-12 12-12h40c6.627 0 12 5.373 12 12v40zm0-96c0 6.627-5.373 12-12 12h-40c-6.627 0-12-5.373-12-12v-40c0-6.627 5.373-12 12-12h40c6.627 0 12 5.373 12 12v40zm0-96c0 6.627-5.373 12-12 12h-40c-6.627 0-12-5.373-12-12V76c0-6.627 5.373-12 12-12h40c6.627 0 12 5.373 12 12v40z"/></svg>
<div class="c lk" style="left:577px;top:18.5px">Musicale</div>
<div class="c" style="left:650px;width:200px;text-align:center;top:7.5px;color:#222">2022-03-23</div><div class="c" style="left:650px;width:200px;text-align:center;top:29.5px;color:#222">11:42:50</div>
<div class="c r" style="left:757.5px;width:200px;top:18.5px;color:#222">-800,00</div>
<div class="c r" style="left:902.5px;width:200px;top:18.5px;color:#222">-800,00</div>
<div class="c r" style="left:1047.5px;width:200px;top:18.5px;color:#222">-8,00</div>
<div class="c r" style="left:1192.5px;width:200px;top:18.5px;color:#222">-8,00</div>
<div class="dot" style="left:1419px;top:18.5px;background:#25a580"></div>
</div>
<div class="row" style="top:382px;height:63px;background:#fff;">
<svg viewBox="0 0 512 512" width="18.20" height="18.20" style="position:absolute;left:9.70px;top:21.00px;" fill="#a89c40"><path d="M239.100 6.300l-208 78c-18.700 7-31.100 25-31.100 45v225.100c0 18.200 10.300 34.800 26.500 42.900l208 104c13.500 6.800 29.400 6.800 42.900 0l208-104c16.300-8.100 26.500-24.800 26.500-42.900V129.300c0-20-12.400-37.900-31.100-44.900l-208-78C262 2.200 250 2.200 239.100 6.300zM256 68.400l192 72v1.100l-192 78-192-78v-1.100l192-72zm32 356V275.500l160-65v133.900l-160 80z"/></svg>
<div class="c lk" style="left:33.5px;top:20.0px">Ref-0023</div>
<div class="c" style="left:135px;top:9.0px;color:#222">Remorque</div><div class="c" style="left:135px;top:31.0px;color:#222">pailleuse</div>
<svg viewBox="0 0 384 512" width="13.27" height="17.70" style="position:absolute;left:278.00px;top:10.70px;" fill="#6a9a3e"><path d="M288 256H96v64h192v-64zm89-151L279.100 7c-4.500-4.500-10.600-7-17-7H256v128h128v-6.100c0-6.300-2.500-12.400-7-16.900zm-153 31V0H24C10.700 0 0 10.700 0 24v464c0 13.300 10.700 24 24 24h336c13.300 0 24-10.700 24-24V160H248c-13.200 0-24-10.800-24-24zM64 72c0-4.420 3.580-8 8-8h80c4.420 0 8 3.580 8 8v16c0 4.420-3.580 8-8 8H72c-4.420 0-8-3.580-8-8V72zm0 64c0-4.420 3.580-8 8-8h80c4.420 0 8 3.580 8 8v16c0 4.420-3.580 8-8 8H72c-4.420 0-8-3.580-8-8v-16zm256 304c0 4.420-3.580 8-8 8h-80c-4.420 0-8-3.580-8-8v-16c0-4.420 3.580-8 8-8h80c4.420 0 8 3.580 8 8v16zm0-200v96c0 8.840-7.160 16-16 16H80c-8.840 0-16-7.160-16-16v-96c0-8.840 7.160-16 16-16h224c8.840 0 16 7.160 16 16z"/></svg>
<div class="c lk" style="left:296.5px;top:9.0px">CO2203-</div><div class="c lk" style="left:278px;top:31.0px">0012</div>
<div class="c" style="left:411px;top:20.0px;color:#222">REF-0012</div>
<svg viewBox="0 0 448 512" width="16.01" height="18.30" style="position:absolute;left:555.60px;top:10.00px;" fill="#6c6aa8"><path d="M436 480h-20V24c0-13.255-10.745-24-24-24H56C42.745 0 32 10.745 32 24v456H12c-6.627 0-12 5.373-12 12v20h448v-20c0-6.627-5.373-12-12-12zM128 76c0-6.627 5.373-12 12-12h40c6.627 0 12 5.373 12 12v40c0 6.627-5.373 12-12 12h-40c-6.627 0-12-5.373-12-12V76zm0 96c0-6.627 5.373-12 12-12h40c6.627 0 12 5.373 12 12v40c0 6.627-5.373 12-12 12h-40c-6.627 0-12-5.373-12-12v-40zm52 148h-40c-6.627 0-12-5.373-12-12v-40c0-6.627 5.373-12 12-12h40c6.627 0 12 5.373 12 12v40c0 6.627-5.373 12-12 12zm76 160h-64v-84c0-6.627 5.373-12 12-12h40c6.627 0 12 5.373 12 12v84zm64-172c0 6.627-5.373 12-12 12h-40c-6.627 0-12-5.373-12-12v-40c0-6.627 5.373-12 12-12h40c6.627 0 12 5.373 12 12v40zm0-96c0 6.627-5.373 12-12 12h-40c-6.627 0-12-5.373-12-12v-40c0-6.627 5.373-12 12-12h40c6.627 0 12 5.373 12 12v40zm0-96c0 6.627-5.373 12-12 12h-40c-6.627 0-12-5.373-12-12V76c0-6.627 5.373-12 12-12h40c6.627 0 12 5.373 12 12v40z"/></svg>
<div class="c lk" style="left:577px;top:9.0px">Société</div><div class="c lk" style="left:556px;top:31.0px">TEM</div>
<div class="c" style="left:650px;width:200px;text-align:center;top:9.0px;color:#222">2022-03-26</div><div class="c" style="left:650px;width:200px;text-align:center;top:31.0px;color:#222">13:17:41</div>
<div class="c r" style="left:757.5px;width:200px;top:20.0px;color:#222">12 489,75</div>
<div class="c r" style="left:902.5px;width:200px;top:20.0px;color:#222">13 932,92</div>
<div class="c r" style="left:1047.5px;width:200px;top:20.0px;color:#222">1,00</div>
<div class="c r" style="left:1192.5px;width:200px;top:20.0px;color:#222">3,00</div>
<div class="dot" style="left:1419px;top:20.0px;background:#25a580"></div>
</div>
<div class="row" style="top:445px;height:62px;background:#fafafa;">
<svg viewBox="0 0 512 512" width="18.20" height="18.20" style="position:absolute;left:9.70px;top:20.50px;" fill="#a89c40"><path d="M239.100 6.300l-208 78c-18.700 7-31.100 25-31.100 45v225.100c0 18.200 10.300 34.800 26.500 42.900l208 104c13.500 6.800 29.400 6.800 42.900 0l208-104c16.300-8.100 26.500-24.800 26.500-42.900V129.300c0-20-12.400-37.900-31.100-44.900l-208-78C262 2.200 250 2.200 239.100 6.300zM256 68.400l192 72v1.100l-192 78-192-78v-1.100l192-72zm32 356V275.500l160-65v133.900l-160 80z"/></svg>
<div class="c lk" style="left:33.5px;top:19.5px">Ref-0023</div>
<div class="c" style="left:135px;top:8.5px;color:#222">Remorque</div><div class="c" style="left:135px;top:30.5px;color:#222">pailleuse</div>
<svg viewBox="0 0 384 512" width="13.27" height="17.70" style="position:absolute;left:278.00px;top:10.20px;" fill="#6a9a3e"><path d="M288 256H96v64h192v-64zm89-151L279.100 7c-4.500-4.500-10.600-7-17-7H256v128h128v-6.100c0-6.300-2.500-12.400-7-16.900zm-153 31V0H24C10.700 0 0 10.700 0 24v464c0 13.300 10.700 24 24 24h336c13.300 0 24-10.700 24-24V160H248c-13.200 0-24-10.800-24-24zM64 72c0-4.420 3.580-8 8-8h80c4.420 0 8 3.580 8 8v16c0 4.420-3.580 8-8 8H72c-4.420 0-8-3.580-8-8V72zm0 64c0-4.420 3.580-8 8-8h80c4.420 0 8 3.580 8 8v16c0 4.420-3.580 8-8 8H72c-4.420 0-8-3.580-8-8v-16zm256 304c0 4.420-3.580 8-8 8h-80c-4.420 0-8-3.580-8-8v-16c0-4.420 3.580-8 8-8h80c4.420 0 8 3.580 8 8v16zm0-200v96c0 8.840-7.160 16-16 16H80c-8.840 0-16-7.160-16-16v-96c0-8.840 7.160-16 16-16h224c8.840 0 16 7.160 16 16z"/></svg>
<div class="c lk" style="left:296.5px;top:8.5px">CO2203-</div><div class="c lk" style="left:278px;top:30.5px">0011</div>
<div class="c" style="left:411px;top:19.5px;color:#222">REF-0012</div>
<svg viewBox="0 0 448 512" width="16.01" height="18.30" style="position:absolute;left:555.60px;top:9.50px;" fill="#6c6aa8"><path d="M436 480h-20V24c0-13.255-10.745-24-24-24H56C42.745 0 32 10.745 32 24v456H12c-6.627 0-12 5.373-12 12v20h448v-20c0-6.627-5.373-12-12-12zM128 76c0-6.627 5.373-12 12-12h40c6.627 0 12 5.373 12 12v40c0 6.627-5.373 12-12 12h-40c-6.627 0-12-5.373-12-12V76zm0 96c0-6.627 5.373-12 12-12h40c6.627 0 12 5.373 12 12v40c0 6.627-5.373 12-12 12h-40c-6.627 0-12-5.373-12-12v-40zm52 148h-40c-6.627 0-12-5.373-12-12v-40c0-6.627 5.373-12 12-12h40c6.627 0 12 5.373 12 12v40c0 6.627-5.373 12-12 12zm76 160h-64v-84c0-6.627 5.373-12 12-12h40c6.627 0 12 5.373 12 12v84zm64-172c0 6.627-5.373 12-12 12h-40c-6.627 0-12-5.373-12-12v-40c0-6.627 5.373-12 12-12h40c6.627 0 12 5.373 12 12v40zm0-96c0 6.627-5.373 12-12 12h-40c-6.627 0-12-5.373-12-12v-40c0-6.627 5.373-12 12-12h40c6.627 0 12 5.373 12 12v40zm0-96c0 6.627-5.373 12-12 12h-40c-6.627 0-12-5.373-12-12V76c0-6.627 5.373-12 12-12h40c6.627 0 12 5.373 12 12v40z"/></svg>
<div class="c lk" style="left:577px;top:8.5px">Société</div><div class="c lk" style="left:556px;top:30.5px">ERO</div>
<div class="c" style="left:650px;width:200px;text-align:center;top:8.5px;color:#222">2022-03-26</div><div class="c" style="left:650px;width:200px;text-align:center;top:30.5px;color:#222">09:35:10</div>
<div class="c r" style="left:757.5px;width:200px;top:19.5px;color:#222">-12 489,75</div>
<div class="c r" style="left:902.5px;width:200px;top:19.5px;color:#222">-12 503,75</div>
<div class="c r" style="left:1047.5px;width:200px;top:19.5px;color:#222">-1,00</div>
<div class="c r" style="left:1192.5px;width:200px;top:19.5px;color:#222">-3,00</div>
<div class="dot" style="left:1419px;top:19.5px;background:#25a580"></div>
</div>
<div class="row" style="top:507px;height:63px;background:#fff;">
<svg viewBox="0 0 512 512" width="18.20" height="18.20" style="position:absolute;left:9.70px;top:21.00px;" fill="#a89c40"><path d="M239.100 6.300l-208 78c-18.700 7-31.100 25-31.100 45v225.100c0 18.200 10.300 34.800 26.500 42.900l208 104c13.500 6.800 29.400 6.800 42.900 0l208-104c16.300-8.100 26.500-24.800 26.500-42.900V129.300c0-20-12.400-37.900-31.100-44.900l-208-78C262 2.200 250 2.200 239.100 6.300zM256 68.400l192 72v1.100l-192 78-192-78v-1.100l192-72zm32 356V275.500l160-65v133.900l-160 80z"/></svg>
<div class="c lk" style="left:33.5px;top:20.0px">Ref-0026</div>
<div class="c" style="left:135px;top:9.0px;color:#222">Signalisation</div><div class="c" style="left:135px;top:31.0px;color:#222">routière</div>
<svg viewBox="0 0 384 512" width="13.27" height="17.70" style="position:absolute;left:278.00px;top:10.70px;" fill="#6a9a3e"><path d="M288 256H96v64h192v-64zm89-151L279.100 7c-4.500-4.500-10.600-7-17-7H256v128h128v-6.100c0-6.300-2.500-12.400-7-16.900zm-153 31V0H24C10.700 0 0 10.700 0 24v464c0 13.300 10.700 24 24 24h336c13.300 0 24-10.700 24-24V160H248c-13.200 0-24-10.800-24-24zM64 72c0-4.420 3.580-8 8-8h80c4.420 0 8 3.580 8 8v16c0 4.420-3.580 8-8 8H72c-4.420 0-8-3.580-8-8V72zm0 64c0-4.420 3.580-8 8-8h80c4.420 0 8 3.580 8 8v16c0 4.420-3.580 8-8 8H72c-4.420 0-8-3.580-8-8v-16zm256 304c0 4.420-3.580 8-8 8h-80c-4.420 0-8-3.580-8-8v-16c0-4.420 3.580-8 8-8h80c4.420 0 8 3.580 8 8v16zm0-200v96c0 8.840-7.160 16-16 16H80c-8.840 0-16-7.160-16-16v-96c0-8.840 7.160-16 16-16h224c8.840 0 16 7.160 16 16z"/></svg>
<div class="c lk" style="left:296.5px;top:9.0px">CO2203-</div><div class="c lk" style="left:278px;top:31.0px">0012</div>
<div class="c" style="left:411px;top:20.0px;color:#222">REF-0012</div>
<svg viewBox="0 0 448 512" width="16.01" height="18.30" style="position:absolute;left:555.60px;top:10.00px;" fill="#6c6aa8"><path d="M436 480h-20V24c0-13.255-10.745-24-24-24H56C42.745 0 32 10.745 32 24v456H12c-6.627 0-12 5.373-12 12v20h448v-20c0-6.627-5.373-12-12-12zM128 76c0-6.627 5.373-12 12-12h40c6.627 0 12 5.373 12 12v40c0 6.627-5.373 12-12 12h-40c-6.627 0-12-5.373-12-12V76zm0 96c0-6.627 5.373-12 12-12h40c6.627 0 12 5.373 12 12v40c0 6.627-5.373 12-12 12h-40c-6.627 0-12-5.373-12-12v-40zm52 148h-40c-6.627 0-12-5.373-12-12v-40c0-6.627 5.373-12 12-12h40c6.627 0 12 5.373 12 12v40c0 6.627-5.373 12-12 12zm76 160h-64v-84c0-6.627 5.373-12 12-12h40c6.627 0 12 5.373 12 12v84zm64-172c0 6.627-5.373 12-12 12h-40c-6.627 0-12-5.373-12-12v-40c0-6.627 5.373-12 12-12h40c6.627 0 12 5.373 12 12v40zm0-96c0 6.627-5.373 12-12 12h-40c-6.627 0-12-5.373-12-12v-40c0-6.627 5.373-12 12-12h40c6.627 0 12 5.373 12 12v40zm0-96c0 6.627-5.373 12-12 12h-40c-6.627 0-12-5.373-12-12V76c0-6.627 5.373-12 12-12h40c6.627 0 12 5.373 12 12v40z"/></svg>
<div class="c lk" style="left:577px;top:9.0px">Société</div><div class="c lk" style="left:556px;top:31.0px">TEM</div>
<div class="c" style="left:650px;width:200px;text-align:center;top:9.0px;color:#222">2022-03-26</div><div class="c" style="left:650px;width:200px;text-align:center;top:31.0px;color:#222">13:17:41</div>
<div class="c r" style="left:757.5px;width:200px;top:20.0px;color:#222">379,75</div>
<div class="c r" style="left:902.5px;width:200px;top:20.0px;color:#222">13 932,92</div>
<div class="c r" style="left:1047.5px;width:200px;top:20.0px;color:#222">1,00</div>
<div class="c r" style="left:1192.5px;width:200px;top:20.0px;color:#222">3,00</div>
<div class="dot" style="left:1419px;top:20.0px;background:#25a580"></div>
</div>
<div class="row" style="top:570px;height:63px;background:#fafafa;">
<svg viewBox="0 0 512 512" width="18.20" height="18.20" style="position:absolute;left:9.70px;top:21.00px;" fill="#a89c40"><path d="M239.100 6.300l-208 78c-18.700 7-31.100 25-31.100 45v225.100c0 18.200 10.300 34.800 26.500 42.900l208 104c13.500 6.800 29.400 6.800 42.900 0l208-104c16.300-8.100 26.500-24.800 26.500-42.900V129.300c0-20-12.400-37.900-31.100-44.900l-208-78C262 2.200 250 2.200 239.100 6.300zM256 68.400l192 72v1.100l-192 78-192-78v-1.100l192-72zm32 356V275.500l160-65v133.900l-160 80z"/></svg>
<div class="c lk" style="left:33.5px;top:20.0px">Ref-0026</div>
<div class="c" style="left:135px;top:9.0px;color:#222">Signalisation</div><div class="c" style="left:135px;top:31.0px;color:#222">routière</div>
<svg viewBox="0 0 384 512" width="13.27" height="17.70" style="position:absolute;left:278.00px;top:10.70px;" fill="#6a9a3e"><path d="M288 256H96v64h192v-64zm89-151L279.100 7c-4.500-4.500-10.600-7-17-7H256v128h128v-6.100c0-6.300-2.500-12.400-7-16.900zm-153 31V0H24C10.700 0 0 10.700 0 24v464c0 13.300 10.700 24 24 24h336c13.300 0 24-10.700 24-24V160H248c-13.200 0-24-10.800-24-24zM64 72c0-4.420 3.580-8 8-8h80c4.420 0 8 3.580 8 8v16c0 4.420-3.580 8-8 8H72c-4.420 0-8-3.580-8-8V72zm0 64c0-4.420 3.580-8 8-8h80c4.420 0 8 3.580 8 8v16c0 4.420-3.580 8-8 8H72c-4.420 0-8-3.580-8-8v-16zm256 304c0 4.420-3.580 8-8 8h-80c-4.420 0-8-3.580-8-8v-16c0-4.420 3.580-8 8-8h80c4.420 0 8 3.580 8 8v16zm0-200v96c0 8.840-7.160 16-16 16H80c-8.840 0-16-7.160-16-16v-96c0-8.840 7.160-16 16-16h224c8.840 0 16 7.160 16 16z"/></svg>
<div class="c lk" style="left:296.5px;top:9.0px">CO2203-</div><div class="c lk" style="left:278px;top:31.0px">0011</div>
<div class="c" style="left:411px;top:20.0px;color:#222">REF-0012</div>
<svg viewBox="0 0 448 512" width="16.01" height="18.30" style="position:absolute;left:555.60px;top:10.00px;" fill="#6c6aa8"><path d="M436 480h-20V24c0-13.255-10.745-24-24-24H56C42.745 0 32 10.745 32 24v456H12c-6.627 0-12 5.373-12 12v20h448v-20c0-6.627-5.373-12-12-12zM128 76c0-6.627 5.373-12 12-12h40c6.627 0 12 5.373 12 12v40c0 6.627-5.373 12-12 12h-40c-6.627 0-12-5.373-12-12V76zm0 96c0-6.627 5.373-12 12-12h40c6.627 0 12 5.373 12 12v40c0 6.627-5.373 12-12 12h-40c-6.627 0-12-5.373-12-12v-40zm52 148h-40c-6.627 0-12-5.373-12-12v-40c0-6.627 5.373-12 12-12h40c6.627 0 12 5.373 12 12v40c0 6.627-5.373 12-12 12zm76 160h-64v-84c0-6.627 5.373-12 12-12h40c6.627 0 12 5.373 12 12v84zm64-172c0 6.627-5.373 12-12 12h-40c-6.627 0-12-5.373-12-12v-40c0-6.627 5.373-12 12-12h40c6.627 0 12 5.373 12 12v40zm0-96c0 6.627-5.373 12-12 12h-40c-6.627 0-12-5.373-12-12v-40c0-6.627 5.373-12 12-12h40c6.627 0 12 5.373 12 12v40zm0-96c0 6.627-5.373 12-12 12h-40c-6.627 0-12-5.373-12-12V76c0-6.627 5.373-12 12-12h40c6.627 0 12 5.373 12 12v40z"/></svg>
<div class="c lk" style="left:577px;top:9.0px">Société</div><div class="c lk" style="left:556px;top:31.0px">ERO</div>
<div class="c" style="left:650px;width:200px;text-align:center;top:9.0px;color:#222">2022-03-26</div><div class="c" style="left:650px;width:200px;text-align:center;top:31.0px;color:#222">09:35:10</div>
<div class="c r" style="left:757.5px;width:200px;top:20.0px;color:#222">-14,00</div>
<div class="c r" style="left:902.5px;width:200px;top:20.0px;color:#222">-12 503,75</div>
<div class="c r" style="left:1047.5px;width:200px;top:20.0px;color:#222">-2,00</div>
<div class="c r" style="left:1192.5px;width:200px;top:20.0px;color:#222">-3,00</div>
<div class="dot" style="left:1419px;top:20.0px;background:#25a580"></div>
</div>
<div class="row" style="top:633px;height:62px;background:#fff;">
<svg viewBox="0 0 512 512" width="18.20" height="18.20" style="position:absolute;left:9.70px;top:20.50px;" fill="#a89c40"><path d="M239.100 6.300l-208 78c-18.700 7-31.100 25-31.100 45v225.100c0 18.200 10.300 34.800 26.500 42.900l208 104c13.500 6.800 29.400 6.800 42.900 0l208-104c16.300-8.100 26.500-24.800 26.500-42.900V129.300c0-20-12.400-37.900-31.100-44.900l-208-78C262 2.200 250 2.200 239.100 6.300zM256 68.400l192 72v1.100l-192 78-192-78v-1.100l192-72zm32 356V275.500l160-65v133.900l-160 80z"/></svg>
<div class="c lk" style="left:33.5px;top:19.5px">Ref-0027</div>
<div class="c" style="left:135px;top:8.5px;color:#222">Kit traîné</div><div class="c" style="left:135px;top:30.5px;color:#222">essieu fixe</div>
<svg viewBox="0 0 384 512" width="13.27" height="17.70" style="position:absolute;left:278.00px;top:10.20px;" fill="#6a9a3e"><path d="M288 256H96v64h192v-64zm89-151L279.100 7c-4.500-4.500-10.600-7-17-7H256v128h128v-6.100c0-6.300-2.500-12.400-7-16.900zm-153 31V0H24C10.700 0 0 10.700 0 24v464c0 13.300 10.700 24 24 24h336c13.300 0 24-10.700 24-24V160H248c-13.200 0-24-10.800-24-24zM64 72c0-4.420 3.580-8 8-8h80c4.420 0 8 3.580 8 8v16c0 4.420-3.580 8-8 8H72c-4.420 0-8-3.580-8-8V72zm0 64c0-4.420 3.580-8 8-8h80c4.420 0 8 3.580 8 8v16c0 4.420-3.580 8-8 8H72c-4.420 0-8-3.580-8-8v-16zm256 304c0 4.420-3.580 8-8 8h-80c-4.420 0-8-3.580-8-8v-16c0-4.420 3.580-8 8-8h80c4.420 0 8 3.580 8 8v16zm0-200v96c0 8.840-7.160 16-16 16H80c-8.840 0-16-7.160-16-16v-96c0-8.840 7.160-16 16-16h224c8.840 0 16 7.160 16 16z"/></svg>
<div class="c lk" style="left:296.5px;top:8.5px">CO2203-</div><div class="c lk" style="left:278px;top:30.5px">0012</div>
<div class="c" style="left:411px;top:19.5px;color:#222">REF-0012</div>
<svg viewBox="0 0 448 512" width="16.01" height="18.30" style="position:absolute;left:555.60px;top:9.50px;" fill="#6c6aa8"><path d="M436 480h-20V24c0-13.255-10.745-24-24-24H56C42.745 0 32 10.745 32 24v456H12c-6.627 0-12 5.373-12 12v20h448v-20c0-6.627-5.373-12-12-12zM128 76c0-6.627 5.373-12 12-12h40c6.627 0 12 5.373 12 12v40c0 6.627-5.373 12-12 12h-40c-6.627 0-12-5.373-12-12V76zm0 96c0-6.627 5.373-12 12-12h40c6.627 0 12 5.373 12 12v40c0 6.627-5.373 12-12 12h-40c-6.627 0-12-5.373-12-12v-40zm52 148h-40c-6.627 0-12-5.373-12-12v-40c0-6.627 5.373-12 12-12h40c6.627 0 12 5.373 12 12v40c0 6.627-5.373 12-12 12zm76 160h-64v-84c0-6.627 5.373-12 12-12h40c6.627 0 12 5.373 12 12v84zm64-172c0 6.627-5.373 12-12 12h-40c-6.627 0-12-5.373-12-12v-40c0-6.627 5.373-12 12-12h40c6.627 0 12 5.373 12 12v40zm0-96c0 6.627-5.373 12-12 12h-40c-6.627 0-12-5.373-12-12v-40c0-6.627 5.373-12 12-12h40c6.627 0 12 5.373 12 12v40zm0-96c0 6.627-5.373 12-12 12h-40c-6.627 0-12-5.373-12-12V76c0-6.627 5.373-12 12-12h40c6.627 0 12 5.373 12 12v40z"/></svg>
<div class="c lk" style="left:577px;top:8.5px">Société</div><div class="c lk" style="left:556px;top:30.5px">TEM</div>
<div class="c" style="left:650px;width:200px;text-align:center;top:8.5px;color:#222">2022-03-26</div><div class="c" style="left:650px;width:200px;text-align:center;top:30.5px;color:#222">13:17:41</div>
<div class="c r" style="left:757.5px;width:200px;top:19.5px;color:#222">1 063,41667</div>
<div class="c r" style="left:902.5px;width:200px;top:19.5px;color:#222">13 932,92</div>
<div class="c r" style="left:1047.5px;width:200px;top:19.5px;color:#222">1,00</div>
<div class="c r" style="left:1192.5px;width:200px;top:19.5px;color:#222">3,00</div>
<div class="dot" style="left:1419px;top:19.5px;background:#993013"></div>
</div>
<div class="row" style="top:695px;height:46px;background:#fafafa;">
<div class="c" style="left:10px;top:11.500px;color:#8c8c8c">Total</div>
<div class="c r" style="left:757.5px;width:200px;top:11.500px;color:#8c8c8c">629,16667</div>
<div class="c r" style="left:1047.5px;width:200px;top:11.500px;color:#8c8c8c">-8,00</div>
</div>
</body></html>
